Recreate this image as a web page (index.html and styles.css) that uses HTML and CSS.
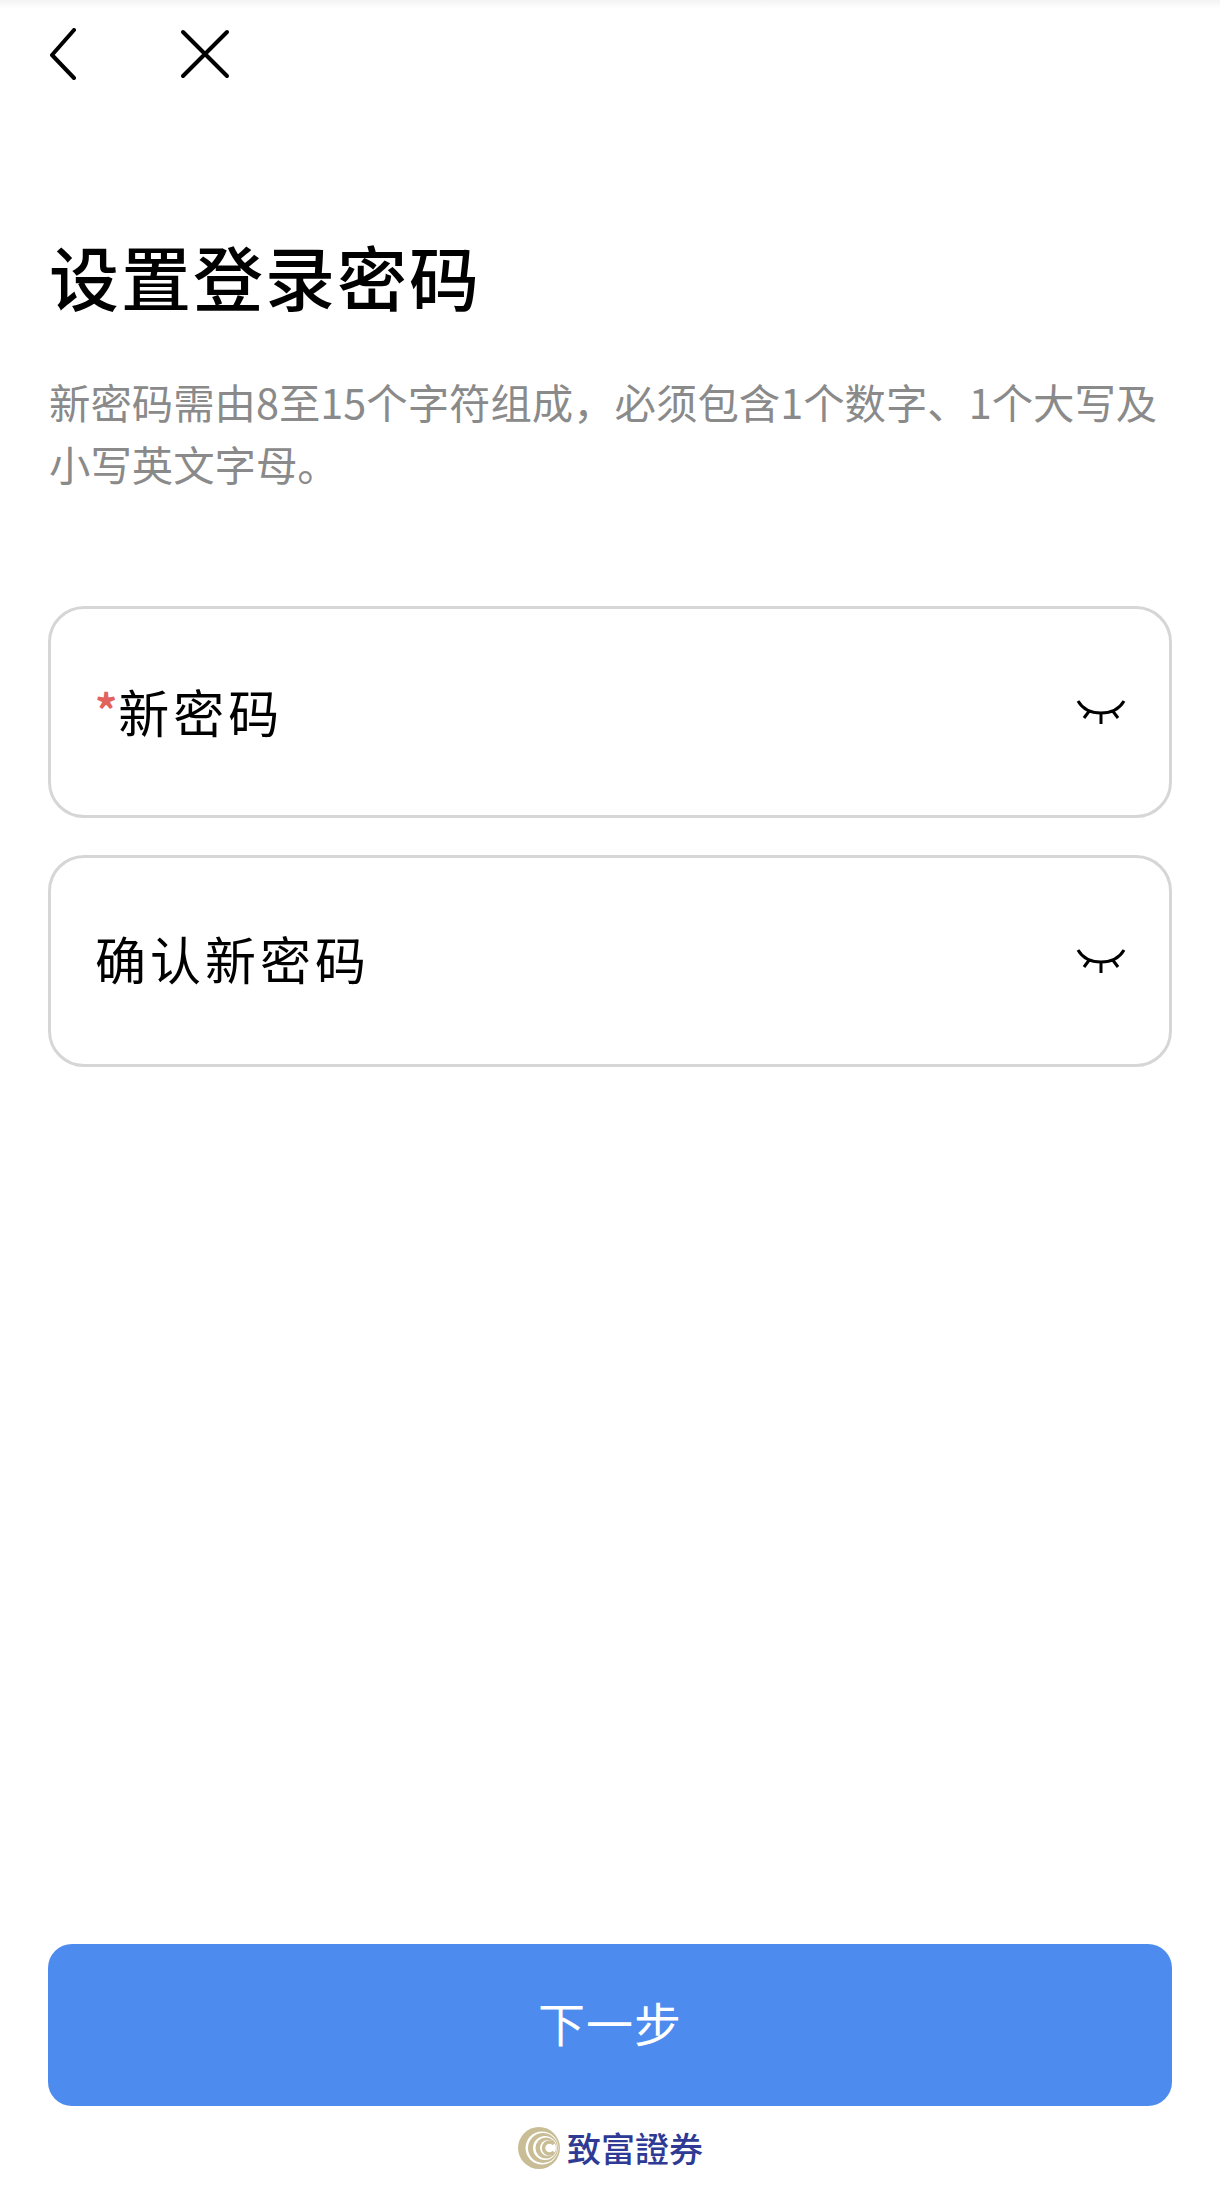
FILE: index.html
```html
<!DOCTYPE html>
<html lang="zh-CN">
<head>
  <meta charset="UTF-8">
  <title>设置登录密码</title>
  <link rel="stylesheet" href="styles.css">
</head>
<body>
  <div class="page">
    <div class="nav">
      <svg class="nav-back" width="30" height="52" viewBox="0 0 30 52"><path d="M26 2 L4 27 L26 50" fill="none" stroke="#000" stroke-width="4" stroke-linecap="round" stroke-linejoin="round"/></svg>
      <svg class="nav-close" width="50" height="52" viewBox="0 0 50 52"><path d="M3 4 L47 48 M47 4 L3 48" fill="none" stroke="#000" stroke-width="4" stroke-linecap="round"/></svg>
    </div>

    <h1 class="title">设置登录密码</h1>
    <p class="desc">新密码需由8至15个字符组成，必须包含1个数字、1个大写及小写英文字母。</p>

    <div class="field">
      <label class="field-label"><span class="req">*</span>新密码</label>
      <svg class="eye" width="50" height="26" viewBox="0 0 50 26"><path d="M2 2 Q9 14 25 14 Q41 14 48 2 M14 11 L8 19 M25 14 L25 25 M36 11 L42 19" fill="none" stroke="#000" stroke-width="3"/></svg>
    </div>
    <div class="field">
      <label class="field-label">确认新密码</label>
      <svg class="eye" width="50" height="26" viewBox="0 0 50 26"><path d="M2 2 Q9 14 25 14 Q41 14 48 2 M14 11 L8 19 M25 14 L25 25 M36 11 L42 19" fill="none" stroke="#000" stroke-width="3"/></svg>
    </div>

    <div class="spacer"></div>

    <button class="next" type="button">下一步</button>

    <div class="brand">
      <svg width="44" height="44" viewBox="0 0 44 44">
        <circle cx="22" cy="22" r="21" fill="#c9bd96"/>
        <circle cx="25" cy="22" r="16.5" fill="#fff"/>
        <circle cx="26" cy="22" r="15" fill="#c9bd96"/>
        <circle cx="28" cy="22" r="12" fill="#fff"/>
        <circle cx="29" cy="22" r="10.5" fill="#c9bd96"/>
        <circle cx="31" cy="22" r="8" fill="#fff"/>
        <path d="M37 18 A6 6 0 1 0 37 26" fill="none" stroke="#c9bd96" stroke-width="3.5"/>
      </svg>
      <span class="brand-name">致富證券</span>
    </div>
  </div>
</body>
</html>
```

FILE: styles.css
```css
* { box-sizing: border-box; }
html, body { margin: 0; padding: 0; }
body { background: #fff; font-family: "Noto Sans CJK SC", "Noto Sans", sans-serif; color: #000; }

.page { width: 1220px; height: 2207px; padding: 28px 48px 0; display: flex; flex-direction: column; background: linear-gradient(#f4f4f4, #fff 9px); }

.nav { display: flex; align-items: center; height: 52px; }
.nav-back { margin-right: 102px; }

.title { margin: 158px 0 0 1px; font-size: 70px; line-height: 76px; font-weight: 500; letter-spacing: 2px; }
.desc { margin: 56px 0 0 1px; width: 1125px; font-size: 41.4px; line-height: 62px; color: #8a8a8a; }

.field { height: 212px; border: 3px solid #d6d6d6; border-radius: 36px; padding: 0 44px; display: flex; align-items: center; justify-content: space-between; }
.desc + .field { margin-top: 112px; }
.field + .field { margin-top: 37px; }
.field-label { font-size: 51px; line-height: 60px; letter-spacing: 4px; margin-bottom: 6px; }
.req { color: #e2635c; font-size: 44px; font-weight: 700; letter-spacing: 1px; vertical-align: 6px; }
.eye { margin-right: -1px; }

.spacer { flex: 1; }

.next { height: 162px; border: none; border-radius: 24px; background: #4d8bee; color: #fff; font: inherit; font-size: 47px; letter-spacing: 1px; padding-bottom: 8px; }

.brand { display: flex; align-items: center; justify-content: center; gap: 6px; height: 101px; padding-bottom: 18px; }
.brand-name { font-size: 34px; line-height: 44px; font-weight: 500; color: #2f3a94; font-family: "Noto Sans CJK TC", sans-serif; }
```
